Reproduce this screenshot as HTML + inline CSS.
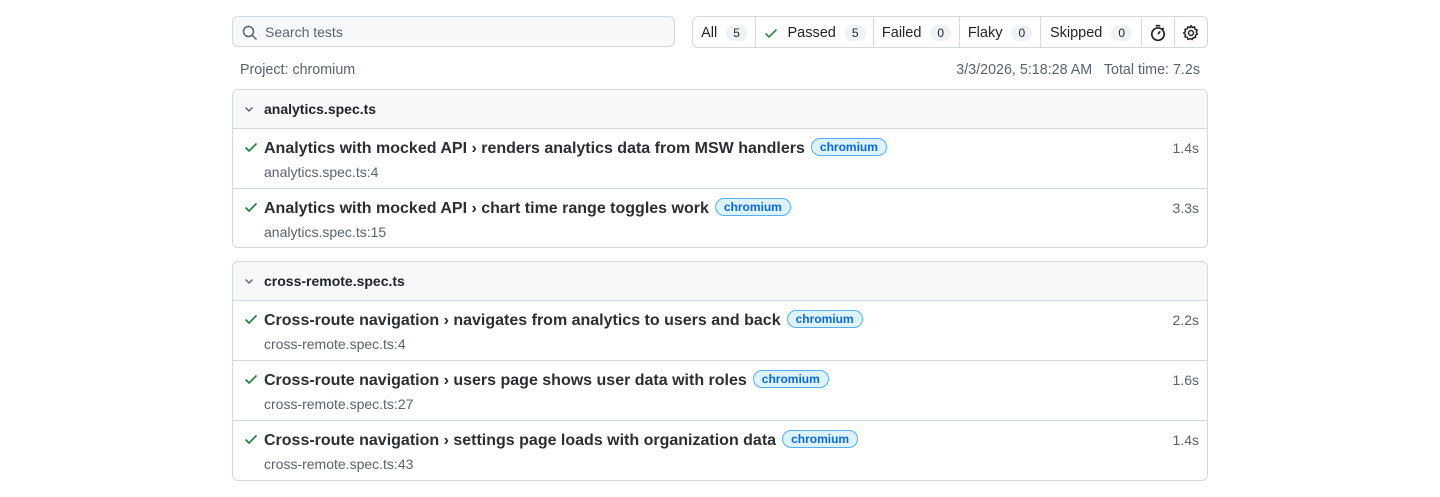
<!DOCTYPE html>
<html><head><meta charset="utf-8"><style>
*{box-sizing:border-box}
body{margin:0;background:#fff;font-family:"Liberation Sans",sans-serif;color:#1f2328;width:1440px;height:497px;overflow:hidden}
.wrap{position:absolute;left:232px;width:976px;top:0}
.search{position:absolute;left:0;top:16px;width:443px;height:31px;border:1px solid #d1d9e0;border-radius:6px;background:#f6f8fa;font-size:14px;color:#59636e;padding:7px 0 0 32px}
.search svg{position:absolute;left:9px;top:8px}
.filters{position:absolute;left:460px;top:16px;width:516px;height:32px;border:1px solid #d1d9e0;border-radius:6px;display:flex;font-size:14.5px}
.filters>div{display:flex;align-items:center;justify-content:center;border-right:1px solid #d1d9e0;height:100%;white-space:nowrap;flex:none;padding-top:1px}
.filters>div:last-child{border-right:none}
.cnt{display:inline-block;background:#eff2f5;border-radius:10px;font-size:12px;padding:1px 7px;margin-left:9px;color:#1f2328}
.meta{position:absolute;top:62px;font-size:14.3px;color:#59636e}
.card{position:absolute;left:0;width:976px;border:1px solid #d1d9e0;border-radius:6px;overflow:hidden}
.hdr{height:39px;background:#f6f8fa;border-bottom:1px solid #d1d9e0;font-size:14px;font-weight:bold;padding:11px 0 0 31px;position:relative}
.hdr svg{position:absolute;left:10px;top:13px}
.row{height:60px;border-bottom:1px solid #d1d9e0;position:relative}
.row:last-child{border-bottom:none;height:59px}
.row svg{position:absolute;left:10px;top:10px}
.t{position:absolute;left:31px;top:9px;font-size:16px;font-weight:bold;color:#2b2f33;white-space:nowrap}
.b{display:inline-block;font-size:12px;color:#0969da;background:#ddf4ff;border:1px solid #54aeff;border-radius:10px;padding:1px 8px;margin-left:6px;vertical-align:2px;font-weight:bold}
.s{position:absolute;left:31px;top:35px;font-size:14px;color:#59636e}
.d{position:absolute;right:8px;top:11px;font-size:14px;color:#59636e}
</style></head><body><div class="wrap">
<div class="search"><svg width="16" height="16" viewBox="0 0 16 16"><circle cx="6.5" cy="6.5" r="5" fill="none" stroke="#59636e" stroke-width="1.5"/><path d="M10.2 10.2L14.5 14.5" stroke="#59636e" stroke-width="1.5"/></svg>Search tests</div>
<div class="filters">
<div style="width:63px">All<span class="cnt">5</span></div>
<div style="width:118px"><svg width="16" height="16" viewBox="0 0 16 16" style="margin-right:8px"><path d="M2.5 8.5l3.5 3.5 7.5-7.5" fill="none" stroke="#1a7f37" stroke-width="1.5"/></svg>Passed<span class="cnt">5</span></div>
<div style="width:86px">Failed<span class="cnt">0</span></div>
<div style="width:81px">Flaky<span class="cnt">0</span></div>
<div style="width:101px">Skipped<span class="cnt">0</span></div>
<div style="width:33px"><svg width="18" height="18" viewBox="0 0 16 16"><circle cx="8" cy="9" r="5.5" fill="none" stroke="#1f2328" stroke-width="1.5"/><path d="M6 1.5h4M8 9l2-2.5M13 3.5l-1.2 1.2" stroke="#1f2328" stroke-width="1.5" fill="none"/></svg></div>
<div style="width:32px"><svg width="18" height="18" viewBox="0 0 16 16"><path d="M8 1.5l1.2 1.6 2-.5.4 2 1.9.8-.8 1.9 1 1.7-1.8 1 .1 2-2 .1-1 1.8-1.7-1-1.9.8-.8-1.9-2-.4.5-2L1.5 8l1.6-1.2-.5-2 2-.4.8-1.9 1.9.8z" fill="none" stroke="#1f2328" stroke-width="1.3" stroke-linejoin="round"/><circle cx="8" cy="8" r="2.2" fill="none" stroke="#1f2328" stroke-width="1.3"/></svg></div>
</div>
<div class="meta" style="left:8px">Project: chromium</div>
<div class="meta" style="right:8px">3/3/2026, 5:18:28 AM&nbsp;&nbsp; Total time: 7.2s</div>

<div class="card" style="top:89px;height:159px">
<div class="hdr"><svg width="12" height="12" viewBox="0 0 12 12"><path d="M2.5 4.5L6 8l3.5-3.5" fill="none" stroke="#59636e" stroke-width="1.4"/></svg>analytics.spec.ts</div>
<div class="row"><svg width="16" height="16" viewBox="0 0 16 16"><path d="M2.5 8.5l3.5 3.5 7.5-7.5" fill="none" stroke="#1a7f37" stroke-width="1.6"/></svg><div class="t">Analytics with mocked API › renders analytics data from MSW handlers<span class="b">chromium</span></div><div class="s">analytics.spec.ts:4</div><div class="d">1.4s</div></div>
<div class="row"><svg width="16" height="16" viewBox="0 0 16 16"><path d="M2.5 8.5l3.5 3.5 7.5-7.5" fill="none" stroke="#1a7f37" stroke-width="1.6"/></svg><div class="t">Analytics with mocked API › chart time range toggles work<span class="b">chromium</span></div><div class="s">analytics.spec.ts:15</div><div class="d">3.3s</div></div>
</div>

<div class="card" style="top:261px;height:220px">
<div class="hdr"><svg width="12" height="12" viewBox="0 0 12 12"><path d="M2.5 4.5L6 8l3.5-3.5" fill="none" stroke="#59636e" stroke-width="1.4"/></svg>cross-remote.spec.ts</div>
<div class="row"><svg width="16" height="16" viewBox="0 0 16 16"><path d="M2.5 8.5l3.5 3.5 7.5-7.5" fill="none" stroke="#1a7f37" stroke-width="1.6"/></svg><div class="t">Cross-route navigation › navigates from analytics to users and back<span class="b">chromium</span></div><div class="s">cross-remote.spec.ts:4</div><div class="d">2.2s</div></div>
<div class="row"><svg width="16" height="16" viewBox="0 0 16 16"><path d="M2.5 8.5l3.5 3.5 7.5-7.5" fill="none" stroke="#1a7f37" stroke-width="1.6"/></svg><div class="t">Cross-route navigation › users page shows user data with roles<span class="b">chromium</span></div><div class="s">cross-remote.spec.ts:27</div><div class="d">1.6s</div></div>
<div class="row"><svg width="16" height="16" viewBox="0 0 16 16"><path d="M2.5 8.5l3.5 3.5 7.5-7.5" fill="none" stroke="#1a7f37" stroke-width="1.6"/></svg><div class="t">Cross-route navigation › settings page loads with organization data<span class="b">chromium</span></div><div class="s">cross-remote.spec.ts:43</div><div class="d">1.4s</div></div>
</div>
</div></body></html>
